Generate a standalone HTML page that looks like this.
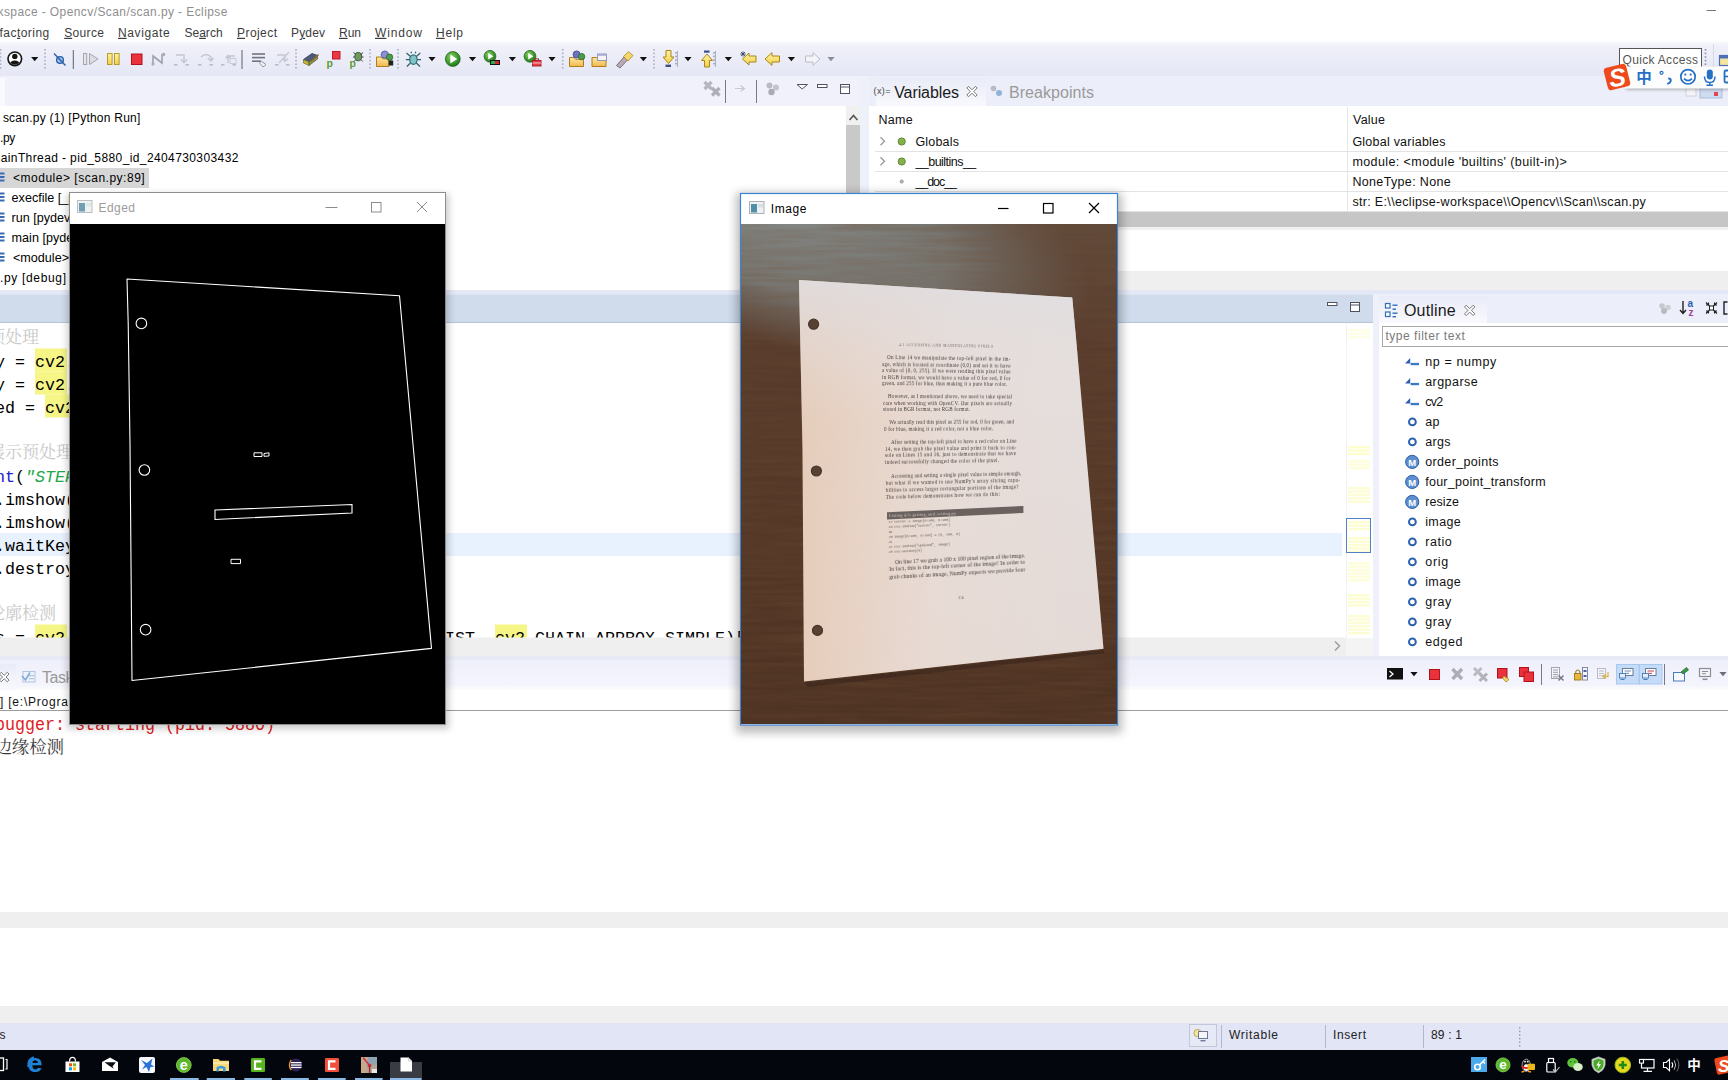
<!DOCTYPE html>
<html lang="zh"><head><meta charset="utf-8"><title>workspace - Opencv/Scan/scan.py - Eclipse</title>
<style>
html,body{margin:0;padding:0;background:#fff;width:1728px;height:1080px;overflow:hidden}
svg{display:block}
text{white-space:pre}
</style></head><body>
<svg width="1728" height="1080" viewBox="0 0 1728 1080">
<defs>
<linearGradient id="tbg" x1="0" y1="0" x2="0" y2="1">
<stop offset="0" stop-color="#fbfbfd"/><stop offset="0.15" stop-color="#eff0f9"/><stop offset="1" stop-color="#e5e7f5"/></linearGradient>
<linearGradient id="hs" x1="0" y1="0" x2="0" y2="1"><stop offset="0" stop-color="#ebebeb"/><stop offset="1" stop-color="#f6f6f6"/></linearGradient>
<linearGradient id="cstrip" x1="0" y1="0" x2="0" y2="1"><stop offset="0" stop-color="#eff0fa"/><stop offset="0.8" stop-color="#f3f4fc"/><stop offset="1" stop-color="#ffffff"/></linearGradient>
<linearGradient id="acttab" x1="0" y1="0" x2="0" y2="1"><stop offset="0" stop-color="#e9ebf7"/><stop offset="1" stop-color="#f9f9fd"/></linearGradient>
<radialGradient id="grn" cx="0.4" cy="0.35" r="0.7"><stop offset="0" stop-color="#8fd06a"/><stop offset="0.6" stop-color="#3f9a2f"/><stop offset="1" stop-color="#23701c"/></radialGradient>
<linearGradient id="yel" x1="0" y1="0" x2="0" y2="1"><stop offset="0" stop-color="#fff3a0"/><stop offset="1" stop-color="#f2cf4a"/></linearGradient>
<linearGradient id="fold" x1="0" y1="0" x2="0" y2="1"><stop offset="0" stop-color="#fde9a8"/><stop offset="1" stop-color="#f0b94a"/></linearGradient>
<filter id="ish" x="-10%" y="-30%" width="120%" height="160%"><feGaussianBlur stdDeviation="1.6"/></filter>
<filter id="wsh" x="-10%" y="-10%" width="120%" height="120%"><feGaussianBlur stdDeviation="5"/></filter><filter id="wsh2" x="-10%" y="-10%" width="120%" height="120%"><feGaussianBlur stdDeviation="3.5"/></filter>

<clipPath id="phc"><rect x="741" y="224" width="376" height="500"/></clipPath>
<linearGradient id="wood" x1="0" y1="0" x2="0" y2="1">
 <stop offset="0" stop-color="#614a3a"/><stop offset="0.25" stop-color="#583b2b"/><stop offset="0.6" stop-color="#543726"/><stop offset="1" stop-color="#4e3222"/></linearGradient>
<radialGradient id="glare" gradientUnits="userSpaceOnUse" cx="0" cy="0" r="1" gradientTransform="translate(770 212) rotate(17) scale(335 128)">
 <stop offset="0" stop-color="#848886" stop-opacity="1"/><stop offset="0.55" stop-color="#7a7b77" stop-opacity="0.9"/><stop offset="0.8" stop-color="#706a64" stop-opacity="0.5"/><stop offset="1" stop-color="#6a6058" stop-opacity="0"/></radialGradient>
<linearGradient id="paper" x1="0" y1="0" x2="1" y2="0.15">
 <stop offset="0" stop-color="#e3c5ae"/><stop offset="0.25" stop-color="#e7d0c1"/><stop offset="0.55" stop-color="#e7dcd7"/><stop offset="1" stop-color="#e3dddc"/></linearGradient>
<linearGradient id="paperv" x1="0" y1="0" x2="0" y2="1">
 <stop offset="0" stop-color="#e0dde0" stop-opacity="0.9"/><stop offset="0.35" stop-color="#e8e0dd" stop-opacity="0.2"/><stop offset="1" stop-color="#e8d0c0" stop-opacity="0.2"/></linearGradient>
<filter id="grain" x="0" y="0" width="100%" height="100%">
 <feTurbulence type="fractalNoise" baseFrequency="0.012 0.22" numOctaves="3" seed="7" result="n"/>
 <feColorMatrix type="matrix" values="0 0 0 0 0.16  0 0 0 0 0.08  0 0 0 0 0.04  0.9 0.9 0 0 -0.62"/>
</filter>
<filter id="blur1"><feGaussianBlur stdDeviation="0.38"/></filter>

</defs>
<rect x="0" y="0" width="1728" height="1080" fill="#ffffff" />
<rect x="0" y="41" width="1728" height="35" fill="url(#tbg)" />
<rect x="0" y="76" width="1728" height="30" fill="#f0f1fa" />
<rect x="0" y="78" width="5" height="28" fill="#f9f9fe" />
<rect x="859" y="76" width="10" height="214" fill="#eef0fa" />
<rect x="869" y="76" width="859" height="30" fill="#eceef9" />
<rect x="876" y="78" width="110" height="28" fill="url(#acttab)" />
<rect x="0" y="106" width="859" height="184" fill="#ffffff" />
<rect x="846" y="106" width="14" height="184" fill="#f0f0f0" />
<rect x="846" y="125" width="14" height="160" fill="#c9c9c9" />
<path d="M849.5 120 L853.5 115.5 L857.5 120" fill="none" stroke="#555" stroke-width="1.6" />
<rect x="869" y="106" width="859" height="184" fill="#ffffff" />
<line x1="875" y1="151.5" x2="1728" y2="151.5" stroke="#e3e3e3" stroke-width="1" />
<line x1="875" y1="171.5" x2="1728" y2="171.5" stroke="#e3e3e3" stroke-width="1" />
<line x1="875" y1="191.5" x2="1728" y2="191.5" stroke="#e3e3e3" stroke-width="1" />
<line x1="875" y1="211.5" x2="1728" y2="211.5" stroke="#e3e3e3" stroke-width="1" />
<line x1="1347.5" y1="107" x2="1347.5" y2="211" stroke="#e6e6e6" stroke-width="1" />
<rect x="869" y="212" width="859" height="15" fill="#c6c6c6" />
<rect x="869" y="227" width="859" height="3" fill="#f1f1f1" />
<rect x="869" y="271" width="859" height="19" fill="#efefef" />
<rect x="0" y="290" width="1728" height="4" fill="#e4e7f5" />
<rect x="0" y="294" width="1373" height="29" fill="#d0dcec" />
<rect x="0" y="294" width="1373" height="1" fill="#dfe6f3" />
<rect x="0" y="322" width="1373" height="1" fill="#b9c5d8" />
<rect x="1373" y="294" width="6" height="366" fill="#eef0fa" />
<rect x="1379" y="294" width="349" height="29" fill="#eceef9" />
<rect x="1379" y="296" width="108" height="27" fill="url(#acttab)" />
<rect x="0" y="323" width="1373" height="315" fill="#ffffff" />
<rect x="0" y="533" width="1342" height="23" fill="#e8f2fe" />
<rect x="1346" y="323" width="1" height="315" fill="#f3f3f3" />
<rect x="0" y="637.5" width="1346" height="18.5" fill="#efefef" />
<path d="M1335 641.5 L1339.5 646 L1335 650.5" fill="none" stroke="#9a9a9a" stroke-width="1.4" />
<rect x="1346" y="638" width="27" height="18" fill="#f4f4f4" />
<rect x="1379" y="323" width="349" height="335" fill="#ffffff" />
<rect x="0" y="656" width="1728" height="4" fill="#e8eaf6" />
<rect x="0" y="660" width="1728" height="31" fill="url(#cstrip)" />
<rect x="0" y="664" width="16" height="26" fill="url(#acttab)" />
<rect x="0" y="690" width="1728" height="222" fill="#ffffff" />
<rect x="0" y="710" width="1728" height="1" fill="#9c9c9c" />
<rect x="0" y="912" width="1728" height="16" fill="#efefef" />
<rect x="0" y="1006" width="1728" height="17" fill="#efefef" />
<rect x="0" y="1023" width="1728" height="27" fill="#e1e5f5" />
<rect x="0" y="1050" width="1728" height="30" fill="#04060e" />
<text x="3.6" y="15.7" font-size="12" fill="#8e8e8e" font-family='"Liberation Sans","Noto Sans CJK SC",sans-serif' text-anchor="end">eclipse-work</text>
<text x="3.9" y="15.7" font-size="12" fill="#8e8e8e" font-family='"Liberation Sans","Noto Sans CJK SC",sans-serif' textLength="223.5" lengthAdjust="spacing" >space - Opencv/Scan/scan.py - Eclipse</text>
<line x1="1706.5" y1="10.5" x2="1716" y2="10.5" stroke="#777" stroke-width="1" />
<text x="-0.8" y="36.8" font-size="12" fill="#3c3c3c" font-family='"Liberation Sans","Noto Sans CJK SC",sans-serif' text-anchor="end">Re</text>
<text x="-0.5" y="36.8" font-size="12" fill="#3c3c3c" font-family='"Liberation Sans","Noto Sans CJK SC",sans-serif' textLength="49.8" lengthAdjust="spacing">fac<tspan text-decoration="underline">t</tspan>oring</text>
<text x="64.2" y="36.8" font-size="12" fill="#3c3c3c" font-family='"Liberation Sans","Noto Sans CJK SC",sans-serif' textLength="39.7" lengthAdjust="spacing"><tspan text-decoration="underline">S</tspan>ource</text>
<text x="118" y="36.8" font-size="12" fill="#3c3c3c" font-family='"Liberation Sans","Noto Sans CJK SC",sans-serif' textLength="51.7" lengthAdjust="spacing"><tspan text-decoration="underline">N</tspan>avigate</text>
<text x="184.4" y="36.8" font-size="12" fill="#3c3c3c" font-family='"Liberation Sans","Noto Sans CJK SC",sans-serif' textLength="38.2" lengthAdjust="spacing">Se<tspan text-decoration="underline">a</tspan>rch</text>
<text x="237" y="36.8" font-size="12" fill="#3c3c3c" font-family='"Liberation Sans","Noto Sans CJK SC",sans-serif' textLength="40" lengthAdjust="spacing"><tspan text-decoration="underline">P</tspan>roject</text>
<text x="291" y="36.8" font-size="12" fill="#3c3c3c" font-family='"Liberation Sans","Noto Sans CJK SC",sans-serif' textLength="34" lengthAdjust="spacing">P<tspan text-decoration="underline">y</tspan>dev</text>
<text x="339" y="36.8" font-size="12" fill="#3c3c3c" font-family='"Liberation Sans","Noto Sans CJK SC",sans-serif' textLength="22" lengthAdjust="spacing"><tspan text-decoration="underline">R</tspan>un</text>
<text x="375" y="36.8" font-size="12" fill="#3c3c3c" font-family='"Liberation Sans","Noto Sans CJK SC",sans-serif' textLength="47" lengthAdjust="spacing"><tspan text-decoration="underline">W</tspan>indow</text>
<text x="436" y="36.8" font-size="12" fill="#3c3c3c" font-family='"Liberation Sans","Noto Sans CJK SC",sans-serif' textLength="27" lengthAdjust="spacing"><tspan text-decoration="underline">H</tspan>elp</text>
<rect x="0" y="168" width="149" height="20" fill="#d6d6d6" />
<text x="2.9" y="122" font-size="12" fill="#000" font-family='"Liberation Sans","Noto Sans CJK SC",sans-serif' textLength="137.4" lengthAdjust="spacing" >scan.py (1) [Python Run]</text>
<text x="-0.3" y="142" font-size="12" fill="#000" font-family='"Liberation Sans","Noto Sans CJK SC",sans-serif' text-anchor="end">scan</text>
<text x="0" y="142" font-size="12" fill="#000" font-family='"Liberation Sans","Noto Sans CJK SC",sans-serif' textLength="15.2" lengthAdjust="spacing" >.py</text>
<text x="0.39999999999999997" y="162" font-size="12" fill="#000" font-family='"Liberation Sans","Noto Sans CJK SC",sans-serif' text-anchor="end">M</text>
<text x="0.7" y="162" font-size="12" fill="#000" font-family='"Liberation Sans","Noto Sans CJK SC",sans-serif' textLength="237.7" lengthAdjust="spacing" >ainThread - pid_5880_id_2404730303432</text>
<text x="13" y="182" font-size="12" fill="#000" font-family='"Liberation Sans","Noto Sans CJK SC",sans-serif' textLength="131.7" lengthAdjust="spacing" >&lt;module&gt; [scan.py:89]</text>
<text x="11.6" y="202" font-size="12.6" fill="#000" font-family='"Liberation Sans","Noto Sans CJK SC",sans-serif' >execfile [_pydev_execfile.py:25]</text>
<text x="11.6" y="222" font-size="12.6" fill="#000" font-family='"Liberation Sans","Noto Sans CJK SC",sans-serif' >run [pydevd.py:1068]</text>
<text x="11.6" y="242" font-size="12.6" fill="#000" font-family='"Liberation Sans","Noto Sans CJK SC",sans-serif' >main [pydevd.py:1658]</text>
<text x="13" y="262" font-size="12.6" fill="#000" font-family='"Liberation Sans","Noto Sans CJK SC",sans-serif' >&lt;module&gt; [pydevd.py:1664]</text>
<text x="-0.3" y="282" font-size="12" fill="#000" font-family='"Liberation Sans","Noto Sans CJK SC",sans-serif' text-anchor="end">scan</text>
<text x="0" y="282" font-size="12" fill="#000" font-family='"Liberation Sans","Noto Sans CJK SC",sans-serif' textLength="66" lengthAdjust="spacing" >.py [debug]</text>
<rect x="0" y="172.5" width="4.5" height="2" fill="#3a6cb5" />
<rect x="0" y="176.0" width="4.5" height="2" fill="#3a6cb5" />
<rect x="0" y="179.5" width="4.5" height="2" fill="#3a6cb5" />
<rect x="0" y="192.5" width="4.5" height="2" fill="#3a6cb5" />
<rect x="0" y="196.0" width="4.5" height="2" fill="#3a6cb5" />
<rect x="0" y="199.5" width="4.5" height="2" fill="#3a6cb5" />
<rect x="0" y="212.5" width="4.5" height="2" fill="#3a6cb5" />
<rect x="0" y="216.0" width="4.5" height="2" fill="#3a6cb5" />
<rect x="0" y="219.5" width="4.5" height="2" fill="#3a6cb5" />
<rect x="0" y="232.5" width="4.5" height="2" fill="#3a6cb5" />
<rect x="0" y="236.0" width="4.5" height="2" fill="#3a6cb5" />
<rect x="0" y="239.5" width="4.5" height="2" fill="#3a6cb5" />
<rect x="0" y="252.5" width="4.5" height="2" fill="#3a6cb5" />
<rect x="0" y="256.0" width="4.5" height="2" fill="#3a6cb5" />
<rect x="0" y="259.5" width="4.5" height="2" fill="#3a6cb5" />
<text x="894.2" y="97.8" font-size="16" fill="#1a1a1a" font-family='"Liberation Sans","Noto Sans CJK SC",sans-serif' textLength="64.8" lengthAdjust="spacing" >Variables</text>
<text x="1009" y="97.8" font-size="16" fill="#9a9a9a" font-family='"Liberation Sans","Noto Sans CJK SC",sans-serif' textLength="85" lengthAdjust="spacing" >Breakpoints</text>
<text x="873.5" y="94" font-size="9" fill="#444" font-family='"Liberation Sans","Noto Sans CJK SC",sans-serif' textLength="17" lengthAdjust="spacing" >(x)=</text>
<text x="878.6" y="124" font-size="12.5" fill="#111" font-family='"Liberation Sans","Noto Sans CJK SC",sans-serif' textLength="34" lengthAdjust="spacing" >Name</text>
<text x="1353" y="124" font-size="12.5" fill="#111" font-family='"Liberation Sans","Noto Sans CJK SC",sans-serif' textLength="32" lengthAdjust="spacing" >Value</text>
<text x="915.4" y="145.8" font-size="12.5" fill="#111" font-family='"Liberation Sans","Noto Sans CJK SC",sans-serif' textLength="43.6" lengthAdjust="spacing" >Globals</text>
<text x="1352.4" y="145.8" font-size="12.5" fill="#111" font-family='"Liberation Sans","Noto Sans CJK SC",sans-serif' textLength="93.1" lengthAdjust="spacing" >Global variables</text>
<path d="M880.5 137.3 L884.5 141.3 L880.5 145.3" fill="none" stroke="#9a9a9a" stroke-width="1.3" />
<circle cx="901.7" cy="141.5" r="3.6" fill="#86b04e" stroke="#5f8a32" stroke-width="1" />
<text x="915.4" y="165.8" font-size="12.5" fill="#111" font-family='"Liberation Sans","Noto Sans CJK SC",sans-serif' textLength="60.9" lengthAdjust="spacing" >__builtins__</text>
<text x="1352.4" y="165.8" font-size="12.5" fill="#111" font-family='"Liberation Sans","Noto Sans CJK SC",sans-serif' textLength="214.4" lengthAdjust="spacing" >module: &lt;module 'builtins' (built-in)&gt;</text>
<path d="M880.5 157.3 L884.5 161.3 L880.5 165.3" fill="none" stroke="#9a9a9a" stroke-width="1.3" />
<circle cx="901.7" cy="161.5" r="3.6" fill="#86b04e" stroke="#5f8a32" stroke-width="1" />
<text x="915.4" y="185.8" font-size="12.5" fill="#111" font-family='"Liberation Sans","Noto Sans CJK SC",sans-serif' textLength="41.6" lengthAdjust="spacing" >__doc__</text>
<text x="1352.4" y="185.8" font-size="12.5" fill="#111" font-family='"Liberation Sans","Noto Sans CJK SC",sans-serif' textLength="98.3" lengthAdjust="spacing" >NoneType: None</text>
<circle cx="901.7" cy="181.5" r="1.6" fill="#b8b8b8" stroke="#8a8a8a" stroke-width="0.8" />
<text x="915.4" y="205.8" font-size="12.5" fill="#111" font-family='"Liberation Sans","Noto Sans CJK SC",sans-serif' textLength="40" lengthAdjust="spacing" >__file__</text>
<text x="1352.4" y="205.8" font-size="12.5" fill="#111" font-family='"Liberation Sans","Noto Sans CJK SC",sans-serif' textLength="293.4" lengthAdjust="spacing" >str: E:\\eclipse-workspace\\Opencv\\Scan\\scan.py</text>
<circle cx="901.7" cy="201.5" r="1.6" fill="#b8b8b8" stroke="#8a8a8a" stroke-width="0.8" />
<text x="1404" y="316" font-size="16" fill="#1a1a1a" font-family='"Liberation Sans","Noto Sans CJK SC",sans-serif' textLength="51.6" lengthAdjust="spacing" >Outline</text>
<rect x="1382.5" y="326.5" width="360" height="20" fill="#ffffff" stroke="#a7a7a7" stroke-width="1"/>
<text x="1385.4" y="340.4" font-size="12" fill="#7a7a7a" font-family='"Liberation Sans","Noto Sans CJK SC",sans-serif' textLength="79.4" lengthAdjust="spacing" >type filter text</text>
<text x="1425.2" y="366.4" font-size="12.5" fill="#111" font-family='"Liberation Sans","Noto Sans CJK SC",sans-serif' textLength="71.1" lengthAdjust="spacing" >np = numpy</text>
<path d="M1405 363.5 L1410.2 358.09999999999997 L1410.2 363.5 Z" fill="#2f5fb0" stroke="none" stroke-width="1" />
<rect x="1410.6" y="362.9" width="8.4" height="2.3" fill="#3a78c8" />
<text x="1425.2" y="386.4" font-size="12.5" fill="#111" font-family='"Liberation Sans","Noto Sans CJK SC",sans-serif' textLength="52.5" lengthAdjust="spacing" >argparse</text>
<path d="M1405 383.5 L1410.2 378.09999999999997 L1410.2 383.5 Z" fill="#2f5fb0" stroke="none" stroke-width="1" />
<rect x="1410.6" y="382.9" width="8.4" height="2.3" fill="#3a78c8" />
<text x="1425.2" y="406.4" font-size="12.5" fill="#111" font-family='"Liberation Sans","Noto Sans CJK SC",sans-serif' textLength="18.1" lengthAdjust="spacing" >cv2</text>
<path d="M1405 403.5 L1410.2 398.09999999999997 L1410.2 403.5 Z" fill="#2f5fb0" stroke="none" stroke-width="1" />
<rect x="1410.6" y="402.9" width="8.4" height="2.3" fill="#3a78c8" />
<text x="1425.2" y="426.4" font-size="12.5" fill="#111" font-family='"Liberation Sans","Noto Sans CJK SC",sans-serif' textLength="14.2" lengthAdjust="spacing" >ap</text>
<circle cx="1412.4" cy="421.9" r="3.4" fill="#fff" stroke="#2d62b0" stroke-width="2" />
<text x="1425.2" y="446.4" font-size="12.5" fill="#111" font-family='"Liberation Sans","Noto Sans CJK SC",sans-serif' textLength="25.3" lengthAdjust="spacing" >args</text>
<circle cx="1412.4" cy="441.9" r="3.4" fill="#fff" stroke="#2d62b0" stroke-width="2" />
<text x="1425.2" y="466.4" font-size="12.5" fill="#111" font-family='"Liberation Sans","Noto Sans CJK SC",sans-serif' textLength="73.4" lengthAdjust="spacing" >order_points</text>
<circle cx="1412.2" cy="461.9" r="6.6" fill="#5d8fd0" stroke="#2f5fa8" stroke-width="1" />
<text x="1412.2" y="465.5" font-size="9.5" fill="#fff" font-family='"Liberation Sans","Noto Sans CJK SC",sans-serif' text-anchor="middle" font-weight="bold">M</text>
<text x="1425.2" y="486.4" font-size="12.5" fill="#111" font-family='"Liberation Sans","Noto Sans CJK SC",sans-serif' textLength="120.4" lengthAdjust="spacing" >four_point_transform</text>
<circle cx="1412.2" cy="481.9" r="6.6" fill="#5d8fd0" stroke="#2f5fa8" stroke-width="1" />
<text x="1412.2" y="485.5" font-size="9.5" fill="#fff" font-family='"Liberation Sans","Noto Sans CJK SC",sans-serif' text-anchor="middle" font-weight="bold">M</text>
<text x="1425.2" y="506.4" font-size="12.5" fill="#111" font-family='"Liberation Sans","Noto Sans CJK SC",sans-serif' textLength="33.7" lengthAdjust="spacing" >resize</text>
<circle cx="1412.2" cy="501.9" r="6.6" fill="#5d8fd0" stroke="#2f5fa8" stroke-width="1" />
<text x="1412.2" y="505.5" font-size="9.5" fill="#fff" font-family='"Liberation Sans","Noto Sans CJK SC",sans-serif' text-anchor="middle" font-weight="bold">M</text>
<text x="1425.2" y="526.4" font-size="12.5" fill="#111" font-family='"Liberation Sans","Noto Sans CJK SC",sans-serif' textLength="35.6" lengthAdjust="spacing" >image</text>
<circle cx="1412.4" cy="521.9" r="3.4" fill="#fff" stroke="#2d62b0" stroke-width="2" />
<text x="1425.2" y="546.4" font-size="12.5" fill="#111" font-family='"Liberation Sans","Noto Sans CJK SC",sans-serif' textLength="26.5" lengthAdjust="spacing" >ratio</text>
<circle cx="1412.4" cy="541.9" r="3.4" fill="#fff" stroke="#2d62b0" stroke-width="2" />
<text x="1425.2" y="566.4" font-size="12.5" fill="#111" font-family='"Liberation Sans","Noto Sans CJK SC",sans-serif' textLength="23.1" lengthAdjust="spacing" >orig</text>
<circle cx="1412.4" cy="561.9" r="3.4" fill="#fff" stroke="#2d62b0" stroke-width="2" />
<text x="1425.2" y="586.4" font-size="12.5" fill="#111" font-family='"Liberation Sans","Noto Sans CJK SC",sans-serif' textLength="35.6" lengthAdjust="spacing" >image</text>
<circle cx="1412.4" cy="581.9" r="3.4" fill="#fff" stroke="#2d62b0" stroke-width="2" />
<text x="1425.2" y="606.4" font-size="12.5" fill="#111" font-family='"Liberation Sans","Noto Sans CJK SC",sans-serif' textLength="26" lengthAdjust="spacing" >gray</text>
<circle cx="1412.4" cy="601.9" r="3.4" fill="#fff" stroke="#2d62b0" stroke-width="2" />
<text x="1425.2" y="626.4" font-size="12.5" fill="#111" font-family='"Liberation Sans","Noto Sans CJK SC",sans-serif' textLength="26" lengthAdjust="spacing" >gray</text>
<circle cx="1412.4" cy="621.9" r="3.4" fill="#fff" stroke="#2d62b0" stroke-width="2" />
<text x="1425.2" y="646.4" font-size="12.5" fill="#111" font-family='"Liberation Sans","Noto Sans CJK SC",sans-serif' textLength="37.3" lengthAdjust="spacing" >edged</text>
<circle cx="1412.4" cy="641.9" r="3.4" fill="#fff" stroke="#2d62b0" stroke-width="2" />
<text x="-35" y="344" font-size="17.4" fill="#c8c8c8" font-family='"Liberation Mono","Noto Sans CJK SC",monospace' textLength="10" lengthAdjust="spacingAndGlyphs" >#</text>
<text x="-12" y="343" font-size="17" fill="#c8c8c8" font-family='"Noto Serif CJK SC","Liberation Serif",serif' textLength="51" lengthAdjust="spacing" >预处理</text>
<rect x="35" y="348.5" width="32" height="23" fill="#f6f686" />
<text x="-35" y="367" font-size="17.4" fill="#000" font-family='"Liberation Mono","Noto Sans CJK SC",monospace' textLength="460" lengthAdjust="spacingAndGlyphs" >gray = cv2.cvtColor(image, cv2.COLOR_BGR2GRAY)</text>
<rect x="35" y="371.5" width="32" height="23" fill="#f6f686" />
<text x="-35" y="390" font-size="17.4" fill="#000" font-family='"Liberation Mono","Noto Sans CJK SC",monospace' textLength="400" lengthAdjust="spacingAndGlyphs" >gray = cv2.GaussianBlur(gray, (5, 5), 0)</text>
<rect x="45" y="394.5" width="32" height="23" fill="#f6f686" />
<text x="-35" y="413" font-size="17.4" fill="#000" font-family='"Liberation Mono","Noto Sans CJK SC",monospace' textLength="320" lengthAdjust="spacingAndGlyphs" >edged = cv2.Canny(gray, 75, 200)</text>
<text x="-35" y="459" font-size="17.4" fill="#c8c8c8" font-family='"Liberation Mono","Noto Sans CJK SC",monospace' textLength="10" lengthAdjust="spacingAndGlyphs" >#</text>
<text x="-12" y="458" font-size="17" fill="#c8c8c8" font-family='"Noto Serif CJK SC","Liberation Serif",serif' textLength="119" lengthAdjust="spacing" >展示预处理结果</text>
<text x="-35" y="482" font-size="17.4" fill="#2222cc" font-family='"Liberation Mono","Noto Sans CJK SC",monospace' textLength="50" lengthAdjust="spacingAndGlyphs" >print</text>
<text x="15" y="482" font-size="17.4" fill="#000" font-family='"Liberation Mono","Noto Sans CJK SC",monospace' textLength="10" lengthAdjust="spacingAndGlyphs" >(</text>
<text x="25" y="482" font-size="17.4" fill="#22a84a" font-family='"Liberation Mono","Noto Sans CJK SC",monospace' textLength="90" lengthAdjust="spacingAndGlyphs" font-style="italic">"STEP 1: </text>
<text x="115" y="481" font-size="17" fill="#22a84a" font-family='"Noto Serif CJK SC","Liberation Serif",serif' textLength="68" lengthAdjust="spacing" >边缘检测</text>
<text x="185" y="482" font-size="17.4" fill="#22a84a" font-family='"Liberation Mono","Noto Sans CJK SC",monospace' textLength="10" lengthAdjust="spacingAndGlyphs" font-style="italic">"</text>
<text x="195" y="482" font-size="17.4" fill="#000" font-family='"Liberation Mono","Noto Sans CJK SC",monospace' textLength="10" lengthAdjust="spacingAndGlyphs" >)</text>
<text x="-35" y="505" font-size="17.4" fill="#000" font-family='"Liberation Mono","Noto Sans CJK SC",monospace' textLength="260" lengthAdjust="spacingAndGlyphs" >cv2.imshow("Image", image)</text>
<text x="-35" y="528" font-size="17.4" fill="#000" font-family='"Liberation Mono","Noto Sans CJK SC",monospace' textLength="260" lengthAdjust="spacingAndGlyphs" >cv2.imshow("Edged", edged)</text>
<text x="-35" y="551" font-size="17.4" fill="#000" font-family='"Liberation Mono","Noto Sans CJK SC",monospace' textLength="140" lengthAdjust="spacingAndGlyphs" >cv2.waitKey(0)</text>
<text x="-35" y="574" font-size="17.4" fill="#000" font-family='"Liberation Mono","Noto Sans CJK SC",monospace' textLength="230" lengthAdjust="spacingAndGlyphs" >cv2.destroyAllWindows()</text>
<text x="-35" y="620" font-size="17.4" fill="#c8c8c8" font-family='"Liberation Mono","Noto Sans CJK SC",monospace' textLength="10" lengthAdjust="spacingAndGlyphs" >#</text>
<text x="-12" y="619" font-size="17" fill="#c8c8c8" font-family='"Noto Serif CJK SC","Liberation Serif",serif' textLength="68" lengthAdjust="spacing" >轮廓检测</text>
<clipPath id="edclip"><rect x="0" y="323" width="1346" height="314.5"/></clipPath><g clip-path="url(#edclip)">
<rect x="35" y="624.5" width="32" height="23" fill="#f6f686" />
<rect x="345" y="624.5" width="32" height="23" fill="#f6f686" />
<rect x="495" y="624.5" width="32" height="23" fill="#f6f686" />
<text x="-35" y="643" font-size="17.4" fill="#000" font-family='"Liberation Mono","Noto Sans CJK SC",monospace' textLength="800" lengthAdjust="spacingAndGlyphs" >cnts = cv2.findContours(edged.copy(), cv2.RETR_LIST, cv2.CHAIN_APPROX_SIMPLE)[1]</text>
</g>
<rect x="1348" y="329" width="22" height="2.4" fill="#fbfb9c" opacity="0.27"/>
<rect x="1348" y="332.4" width="22" height="2.4" fill="#fbfb9c" opacity="0.27"/>
<rect x="1348" y="335.79999999999995" width="22" height="2.4" fill="#fbfb9c" opacity="0.27"/>
<rect x="1348" y="446" width="22" height="2.4" fill="#fbfb9c" opacity="0.51"/>
<rect x="1348" y="449.4" width="22" height="2.4" fill="#fbfb9c" opacity="0.51"/>
<rect x="1348" y="452.79999999999995" width="22" height="2.4" fill="#fbfb9c" opacity="0.51"/>
<rect x="1348" y="460" width="22" height="2.4" fill="#fbfb9c" opacity="0.36"/>
<rect x="1348" y="463.4" width="22" height="2.4" fill="#fbfb9c" opacity="0.36"/>
<rect x="1348" y="466.79999999999995" width="22" height="2.4" fill="#fbfb9c" opacity="0.36"/>
<rect x="1348" y="487" width="22" height="2.4" fill="#fbfb9c" opacity="0.42"/>
<rect x="1348" y="490.4" width="22" height="2.4" fill="#fbfb9c" opacity="0.42"/>
<rect x="1348" y="493.79999999999995" width="22" height="2.4" fill="#fbfb9c" opacity="0.42"/>
<rect x="1348" y="497.19999999999993" width="22" height="2.4" fill="#fbfb9c" opacity="0.42"/>
<rect x="1348" y="500.5999999999999" width="22" height="2.4" fill="#fbfb9c" opacity="0.42"/>
<rect x="1348" y="521" width="22" height="2.4" fill="#fbfb9c" opacity="0.48"/>
<rect x="1348" y="524.4" width="22" height="2.4" fill="#fbfb9c" opacity="0.48"/>
<rect x="1348" y="527.8" width="22" height="2.4" fill="#fbfb9c" opacity="0.48"/>
<rect x="1348" y="537" width="22" height="2.4" fill="#fbfb9c" opacity="0.48"/>
<rect x="1348" y="540.4" width="22" height="2.4" fill="#fbfb9c" opacity="0.48"/>
<rect x="1348" y="543.8" width="22" height="2.4" fill="#fbfb9c" opacity="0.48"/>
<rect x="1348" y="547.1999999999999" width="22" height="2.4" fill="#fbfb9c" opacity="0.48"/>
<rect x="1348" y="550.5999999999999" width="22" height="2.4" fill="#fbfb9c" opacity="0.48"/>
<rect x="1348" y="562" width="22" height="2.4" fill="#fbfb9c" opacity="0.39"/>
<rect x="1348" y="565.4" width="22" height="2.4" fill="#fbfb9c" opacity="0.39"/>
<rect x="1348" y="568.8" width="22" height="2.4" fill="#fbfb9c" opacity="0.39"/>
<rect x="1348" y="572.1999999999999" width="22" height="2.4" fill="#fbfb9c" opacity="0.39"/>
<rect x="1348" y="575.5999999999999" width="22" height="2.4" fill="#fbfb9c" opacity="0.39"/>
<rect x="1348" y="578.9999999999999" width="22" height="2.4" fill="#fbfb9c" opacity="0.39"/>
<rect x="1348" y="594" width="22" height="2.4" fill="#fbfb9c" opacity="0.45"/>
<rect x="1348" y="597.4" width="22" height="2.4" fill="#fbfb9c" opacity="0.45"/>
<rect x="1348" y="600.8" width="22" height="2.4" fill="#fbfb9c" opacity="0.45"/>
<rect x="1348" y="604.1999999999999" width="22" height="2.4" fill="#fbfb9c" opacity="0.45"/>
<rect x="1348" y="615" width="22" height="2.4" fill="#fbfb9c" opacity="0.42"/>
<rect x="1348" y="618.4" width="22" height="2.4" fill="#fbfb9c" opacity="0.42"/>
<rect x="1348" y="621.8" width="22" height="2.4" fill="#fbfb9c" opacity="0.42"/>
<rect x="1348" y="625.1999999999999" width="22" height="2.4" fill="#fbfb9c" opacity="0.42"/>
<rect x="1348" y="628.5999999999999" width="22" height="2.4" fill="#fbfb9c" opacity="0.42"/>
<rect x="1348" y="631.9999999999999" width="22" height="2.4" fill="#fbfb9c" opacity="0.42"/>
<rect x="1346.5" y="518.5" width="24" height="34" fill="none" stroke="#4f81c9" stroke-width="1"/>
<text x="42.1" y="682.8" font-size="16" fill="#9a9a9a" font-family='"Liberation Sans","Noto Sans CJK SC",sans-serif' textLength="39" lengthAdjust="spacing" >Tasks</text>
<text x="-0.3" y="706.4" font-size="12" fill="#111" font-family='"Liberation Sans","Noto Sans CJK SC",sans-serif' text-anchor="end">scan.py [debug</text>
<text x="0" y="706.4" font-size="12" fill="#111" font-family='"Liberation Sans","Noto Sans CJK SC",sans-serif' textLength="248" lengthAdjust="spacing" >] [e:\Program Files\Python36\python.exe]</text>
<text x="-85" y="730.3" font-size="17.6" fill="#e01b24" font-family='"Liberation Mono","Noto Sans CJK SC",monospace' textLength="360" lengthAdjust="spacingAndGlyphs" >pydev debugger: starting (pid: 5880)</text>
<text x="-85" y="753.3" font-size="17.6" fill="#333" font-family='"Liberation Mono","Noto Sans CJK SC",monospace' textLength="80" lengthAdjust="spacingAndGlyphs" >STEP 1: </text>
<text x="-5.5" y="753.2" font-size="17.5" fill="#3a3a3a" font-family='"Noto Serif CJK SC","Liberation Serif",serif' textLength="69.5" lengthAdjust="spacing" >边缘检测</text>
<text x="-0.5" y="1039" font-size="12" fill="#222" font-family='"Liberation Sans","Noto Sans CJK SC",sans-serif' >s</text>
<text x="1229" y="1039" font-size="12" fill="#222" font-family='"Liberation Sans","Noto Sans CJK SC",sans-serif' textLength="49" lengthAdjust="spacing" >Writable</text>
<text x="1333" y="1039" font-size="12" fill="#222" font-family='"Liberation Sans","Noto Sans CJK SC",sans-serif' textLength="33" lengthAdjust="spacing" >Insert</text>
<text x="1431" y="1039" font-size="12" fill="#222" font-family='"Liberation Sans","Noto Sans CJK SC",sans-serif' textLength="31" lengthAdjust="spacing" >89 : 1</text>
<line x1="1221.5" y1="1025" x2="1221.5" y2="1048" stroke="#b4b8c8" stroke-width="1" />
<line x1="1325.5" y1="1025" x2="1325.5" y2="1048" stroke="#b4b8c8" stroke-width="1" />
<line x1="1423.5" y1="1025" x2="1423.5" y2="1048" stroke="#b4b8c8" stroke-width="1" />
<rect x="1519" y="1027.0" width="1.4" height="1.6" fill="#9a9fb5" />
<rect x="1519" y="1030.6" width="1.4" height="1.6" fill="#9a9fb5" />
<rect x="1519" y="1034.2" width="1.4" height="1.6" fill="#9a9fb5" />
<rect x="1519" y="1037.8" width="1.4" height="1.6" fill="#9a9fb5" />
<rect x="1519" y="1041.4" width="1.4" height="1.6" fill="#9a9fb5" />
<rect x="1519" y="1045.0" width="1.4" height="1.6" fill="#9a9fb5" />
<rect x="1619.5" y="48.5" width="82" height="19" fill="#ffffff" stroke="#555" stroke-width="1"/>
<text x="1622.5" y="63.7" font-size="12" fill="#555" font-family='"Liberation Sans","Noto Sans CJK SC",sans-serif' textLength="75.5" lengthAdjust="spacing" >Quick Access</text>
<rect x="-0.30000000000000004" y="49" width="1.6" height="1.6" fill="#a9aec4" />
<rect x="-0.30000000000000004" y="52.6" width="1.6" height="1.6" fill="#a9aec4" />
<rect x="-0.30000000000000004" y="56.2" width="1.6" height="1.6" fill="#a9aec4" />
<rect x="-0.30000000000000004" y="59.800000000000004" width="1.6" height="1.6" fill="#a9aec4" />
<rect x="-0.30000000000000004" y="63.400000000000006" width="1.6" height="1.6" fill="#a9aec4" />
<rect x="-0.30000000000000004" y="67.0" width="1.6" height="1.6" fill="#a9aec4" />
<circle cx="14.8" cy="58.8" r="7.6" fill="#151515" stroke="none" stroke-width="1" />
<circle cx="14.8" cy="58.8" r="6.0" fill="#ffffff" stroke="none" stroke-width="1" />
<clipPath id="pc"><circle cx="14.8" cy="58.8" r="6"/></clipPath>
<circle cx="14.8" cy="56.4" r="2.7" fill="#151515" stroke="none" stroke-width="1" />
<ellipse cx="14.8" cy="64.6" rx="5.2" ry="4.2" fill="#151515" clip-path="url(#pc)"/>
<path d="M31.1 57 L38.300000000000004 57 L34.7 61.2 Z" fill="#111" stroke="none" stroke-width="1" />
<rect x="44.2" y="49" width="1.6" height="1.6" fill="#a9aec4" />
<rect x="44.2" y="52.6" width="1.6" height="1.6" fill="#a9aec4" />
<rect x="44.2" y="56.2" width="1.6" height="1.6" fill="#a9aec4" />
<rect x="44.2" y="59.800000000000004" width="1.6" height="1.6" fill="#a9aec4" />
<rect x="44.2" y="63.400000000000006" width="1.6" height="1.6" fill="#a9aec4" />
<rect x="44.2" y="67.0" width="1.6" height="1.6" fill="#a9aec4" />
<circle cx="60" cy="60" r="3.4" fill="#9fc0ea" stroke="#2a5fa8" stroke-width="1.3" />
<line x1="54" y1="53.5" x2="65.5" y2="65.5" stroke="#2a5fa8" stroke-width="1.4" />
<line x1="73.3" y1="50" x2="73.3" y2="69" stroke="#5a6072" stroke-width="1" />
<rect x="83.5" y="53.5" width="3.2" height="11" fill="#e4e4ea" stroke="#a3a5ad" stroke-width="1"/>
<path d="M89.5 53.5 L98 59 L89.5 64.5 Z" fill="#dcdce3" stroke="#a3a5ad" stroke-width="1" />
<rect x="107.5" y="53.5" width="4.6" height="11" fill="url(#yel)" stroke="#b89a28" stroke-width="1"/>
<rect x="114.5" y="53.5" width="4.6" height="11" fill="url(#yel)" stroke="#b89a28" stroke-width="1"/>
<rect x="131.5" y="54" width="10.5" height="10.5" fill="#e9323c" stroke="#b3121c" stroke-width="1"/>
<path d="M153 64 L153 56 L162 63 L162 54" fill="none" stroke="#a0a3ab" stroke-width="1.6" />
<circle cx="163.5" cy="54.5" r="1.8" fill="#a9acb4" stroke="none" stroke-width="1" />
<circle cx="153" cy="64" r="1.6" fill="#a9acb4" stroke="none" stroke-width="1" />
<rect x="174" y="64" width="3.5" height="1.6" fill="#b9bcc6" />
<rect x="185.5" y="64" width="3.5" height="1.6" fill="#b9bcc6" />
<rect x="198" y="64" width="3.5" height="1.6" fill="#b9bcc6" />
<rect x="209.5" y="64" width="3.5" height="1.6" fill="#b9bcc6" />
<rect x="221" y="64" width="3.5" height="1.6" fill="#b9bcc6" />
<rect x="232.5" y="64" width="3.5" height="1.6" fill="#b9bcc6" />
<path d="M176 55 L184 55 L184 62 M181 59.5 L184 62.5 L187 59.5" fill="none" stroke="#c3c6cf" stroke-width="1.4" />
<path d="M201 57 Q206 52 211 57 L211 60 M208 58 L211 61 L213.5 58" fill="none" stroke="#c3c6cf" stroke-width="1.4" />
<path d="M228 63 L228 56 L235 56 M225.5 58.5 L228 55.5 L230.5 58.5" fill="none" stroke="#c3c6cf" stroke-width="1.4" />
<rect x="230" y="58.5" width="6" height="5" fill="none" stroke="#c9ccd4" stroke-width="1"/>
<line x1="242" y1="50" x2="242" y2="69" stroke="#5a6072" stroke-width="1" />
<rect x="252" y="53.2" width="13" height="1.6" fill="#70747e" />
<rect x="252" y="56.800000000000004" width="13" height="1.6" fill="#70747e" />
<rect x="252" y="60.400000000000006" width="9" height="1.6" fill="#70747e" />
<path d="M261 61 L266 64.5 L263 67 L259.5 63 Z" fill="#f2f2f5" stroke="#8a8d96" stroke-width="0.9" />
<rect x="275" y="64" width="3.5" height="1.6" fill="#b9bcc6" />
<rect x="286" y="64" width="3.5" height="1.6" fill="#b9bcc6" />
<path d="M277 55 L285 55 L285 61 M282.5 58.5 L285 61.5 L288 58.5 M279 63 L289 52" fill="none" stroke="#c6c9d1" stroke-width="1.3" />
<rect x="295.2" y="49" width="1.6" height="1.6" fill="#a9aec4" />
<rect x="295.2" y="52.6" width="1.6" height="1.6" fill="#a9aec4" />
<rect x="295.2" y="56.2" width="1.6" height="1.6" fill="#a9aec4" />
<rect x="295.2" y="59.800000000000004" width="1.6" height="1.6" fill="#a9aec4" />
<rect x="295.2" y="63.400000000000006" width="1.6" height="1.6" fill="#a9aec4" />
<rect x="295.2" y="67.0" width="1.6" height="1.6" fill="#a9aec4" />
<path d="M303.5 59.5 L312 53.5 L317.5 55.5 L309 62 Z" fill="#4d5a7a" stroke="#2f3a55" stroke-width="0.8" />
<path d="M303.5 59.5 L309 62 L309 65.5 L303.5 63 Z" fill="#c7b43a" stroke="#6d6a2a" stroke-width="0.7" />
<path d="M309 62 L317.5 55.5 L317.5 59 L309 65.5 Z" fill="#8c9a4a" stroke="#4a5530" stroke-width="0.7" />
<path d="M311 61.5 L318.5 54.5" fill="none" stroke="#8a6a3a" stroke-width="1.6" />
<text x="326.6" y="66.5" font-size="10.5" fill="#5e9a3a" font-family='"Liberation Sans","Noto Sans CJK SC",sans-serif' font-weight="bold">p</text>
<rect x="332.5" y="51.5" width="7.5" height="7.5" fill="#ea3844" stroke="#c21a28" stroke-width="1"/>
<text x="349.6" y="66.5" font-size="10.5" fill="#5e9a3a" font-family='"Liberation Sans","Noto Sans CJK SC",sans-serif' font-weight="bold">p</text>
<ellipse cx="358.3" cy="56.6" rx="3.4" ry="4.2" fill="#6e9a5a" stroke="#3d5a3a" stroke-width="1"/>
<path d="M353.5 52.5 L356 54.5 M363 52.5 L360.6 54.5 M353 57 L355 57 M363.6 57 L361.6 57 M354 61.5 L356 59.5 M362.8 61.5 L360.8 59.5" fill="none" stroke="#3d4a48" stroke-width="1" />
<rect x="369.2" y="49" width="1.6" height="1.6" fill="#a9aec4" />
<rect x="369.2" y="52.6" width="1.6" height="1.6" fill="#a9aec4" />
<rect x="369.2" y="56.2" width="1.6" height="1.6" fill="#a9aec4" />
<rect x="369.2" y="59.800000000000004" width="1.6" height="1.6" fill="#a9aec4" />
<rect x="369.2" y="63.400000000000006" width="1.6" height="1.6" fill="#a9aec4" />
<rect x="369.2" y="67.0" width="1.6" height="1.6" fill="#a9aec4" />
<path d="M376.5 57 L381 57 L382.5 58.8 L389 58.8 L389 66.5 L376.5 66.5 Z" fill="url(#fold)" stroke="#b47a1c" stroke-width="1" />
<circle cx="384.8" cy="54.6" r="3.6" fill="#8a8fd6" stroke="#4a4f9a" stroke-width="0.8" />
<circle cx="389.6" cy="57.2" r="3.2" fill="#4f9a4a" stroke="#2a6a2a" stroke-width="0.8" />
<rect x="388.6" y="60.5" width="4.6" height="5" fill="#222" />
<rect x="397.2" y="49" width="1.6" height="1.6" fill="#a9aec4" />
<rect x="397.2" y="52.6" width="1.6" height="1.6" fill="#a9aec4" />
<rect x="397.2" y="56.2" width="1.6" height="1.6" fill="#a9aec4" />
<rect x="397.2" y="59.800000000000004" width="1.6" height="1.6" fill="#a9aec4" />
<rect x="397.2" y="63.400000000000006" width="1.6" height="1.6" fill="#a9aec4" />
<rect x="397.2" y="67.0" width="1.6" height="1.6" fill="#a9aec4" />
<ellipse cx="413.4" cy="59.6" rx="3.7" ry="4.8" fill="#7fc4c4" stroke="#2f6f7a" stroke-width="1.2"/>
<path d="M406.5 53 L410.5 56.5 M420.3 53 L416.3 56.5 M405.8 59.6 L409.5 59.6 M421 59.6 L417.3 59.6 M406.8 66.5 L410.5 63 M420 66.5 L416.3 63 M411.5 53.3 L411 51.8 M415.3 53.3 L415.8 51.8" fill="none" stroke="#2f5f6a" stroke-width="1.2" />
<path d="M428.4 57 L435.6 57 L432 61.2 Z" fill="#111" stroke="none" stroke-width="1" />
<circle cx="452.8" cy="59" r="7.4" fill="url(#grn)" stroke="#1f6a1a" stroke-width="0.8" />
<path d="M450.3 54.6 L457.3 59 L450.3 63.4 Z" fill="#ffffff" stroke="none" stroke-width="1" />
<path d="M468.9 57 L476.1 57 L472.5 61.2 Z" fill="#111" stroke="none" stroke-width="1" />
<circle cx="490" cy="56.3" r="5.9" fill="url(#grn)" stroke="#1f6a1a" stroke-width="0.8" />
<path d="M488.2 53 L493.4 56.3 L488.2 59.6 Z" fill="#ffffff" stroke="none" stroke-width="1" />
<rect x="490" y="60" width="10" height="5" fill="#111" />
<rect x="491" y="61" width="4" height="3" fill="#22b14c" />
<rect x="495" y="61" width="4" height="3" fill="#e0202a" />
<path d="M508.79999999999995 57 L516.0 57 L512.4 61.2 Z" fill="#111" stroke="none" stroke-width="1" />
<circle cx="530" cy="56.3" r="5.9" fill="url(#grn)" stroke="#1f6a1a" stroke-width="0.8" />
<path d="M528.2 53 L533.4 56.3 L528.2 59.6 Z" fill="#ffffff" stroke="none" stroke-width="1" />
<rect x="532.5" y="60.5" width="8.5" height="5.5" fill="#e8404a" stroke="#a81820" stroke-width="0.9"/>
<rect x="535" y="58.8" width="3.5" height="1.8" fill="none" stroke="#a81820" stroke-width="0.9"/>
<rect x="532.5" y="62.5" width="8.5" height="1" fill="#f7c0c4" />
<path d="M548.4 57 L555.6 57 L552 61.2 Z" fill="#111" stroke="none" stroke-width="1" />
<rect x="561.9000000000001" y="49" width="1.6" height="1.6" fill="#a9aec4" />
<rect x="561.9000000000001" y="52.6" width="1.6" height="1.6" fill="#a9aec4" />
<rect x="561.9000000000001" y="56.2" width="1.6" height="1.6" fill="#a9aec4" />
<rect x="561.9000000000001" y="59.800000000000004" width="1.6" height="1.6" fill="#a9aec4" />
<rect x="561.9000000000001" y="63.400000000000006" width="1.6" height="1.6" fill="#a9aec4" />
<rect x="561.9000000000001" y="67.0" width="1.6" height="1.6" fill="#a9aec4" />
<path d="M569.5 57.5 L574 57.5 L575.5 59.3 L583.5 59.3 L583.5 66.5 L569.5 66.5 Z" fill="url(#fold)" stroke="#b47a1c" stroke-width="1" />
<circle cx="576.6" cy="54.4" r="3.5" fill="#6d73c4" stroke="#3d438a" stroke-width="0.8" />
<circle cx="581.6" cy="56.6" r="3.2" fill="#4f9a4a" stroke="#2a6a2a" stroke-width="0.8" />
<path d="M592 57.5 L596.5 57.5 L598 59.3 L606 59.3 L606 66.5 L592 66.5 Z" fill="url(#fold)" stroke="#b47a1c" stroke-width="1" />
<rect x="597.5" y="54" width="9" height="6.5" fill="#f4f4fa" stroke="#8a8fb0" stroke-width="0.9"/>
<rect x="597.5" y="54" width="9" height="1.8" fill="#a9add6" />
<path d="M616.5 65.5 L624 57 L627.5 60 L620 68 Z" fill="#b9a9b4" stroke="#6a5a66" stroke-width="0.8" />
<path d="M623.5 56.5 L628.5 51.5 L633 55.5 L628 61 Z" fill="#f4d66a" stroke="#a9862a" stroke-width="0.8" />
<path d="M639.8 57 L647.0 57 L643.4 61.2 Z" fill="#111" stroke="none" stroke-width="1" />
<rect x="653.2" y="49" width="1.6" height="1.6" fill="#a9aec4" />
<rect x="653.2" y="52.6" width="1.6" height="1.6" fill="#a9aec4" />
<rect x="653.2" y="56.2" width="1.6" height="1.6" fill="#a9aec4" />
<rect x="653.2" y="59.800000000000004" width="1.6" height="1.6" fill="#a9aec4" />
<rect x="653.2" y="63.400000000000006" width="1.6" height="1.6" fill="#a9aec4" />
<rect x="653.2" y="67.0" width="1.6" height="1.6" fill="#a9aec4" />
<path d="M666 50.5 L671 50.5 L671 57 L674 57 L668.5 63.5 L663 57 L666 57 Z" fill="url(#yel)" stroke="#a9861c" stroke-width="1" />
<rect x="665.5" y="64.6" width="5.5" height="2.4" fill="#3a4f8a" />
<rect x="675.3" y="52.0" width="1.4" height="1.6" fill="#8a93b8" />
<rect x="675.3" y="55.6" width="1.4" height="1.6" fill="#8a93b8" />
<rect x="675.3" y="59.2" width="1.4" height="1.6" fill="#8a93b8" />
<rect x="675.3" y="62.8" width="1.4" height="1.6" fill="#8a93b8" />
<line x1="677.5" y1="51" x2="677.5" y2="67" stroke="#9aa0b8" stroke-width="0.8" />
<path d="M684.4 57 L691.6 57 L688 61.2 Z" fill="#111" stroke="none" stroke-width="1" />
<path d="M704.5 67 L709.5 67 L709.5 60.5 L712.5 60.5 L707 54 L701.5 60.5 L704.5 60.5 Z" fill="url(#yel)" stroke="#a9861c" stroke-width="1" />
<rect x="704" y="50.5" width="5.5" height="2.2" fill="#3a4f8a" />
<rect x="713.3" y="52.0" width="1.4" height="1.6" fill="#8a93b8" />
<rect x="713.3" y="55.6" width="1.4" height="1.6" fill="#8a93b8" />
<rect x="713.3" y="59.2" width="1.4" height="1.6" fill="#8a93b8" />
<rect x="713.3" y="62.8" width="1.4" height="1.6" fill="#8a93b8" />
<line x1="715.5" y1="51" x2="715.5" y2="67" stroke="#9aa0b8" stroke-width="0.8" />
<path d="M724.6999999999999 57 L731.9 57 L728.3 61.2 Z" fill="#111" stroke="none" stroke-width="1" />
<path d="M756 56 L749 56 L749 53 L742.5 59 L749 65 L749 62 L756 62 Z" fill="url(#yel)" stroke="#a9861c" stroke-width="1" />
<path d="M741 52 L745 56 M745 52 L741 56 M743 51.3 L743 56.7 M740.3 54 L745.7 54" fill="none" stroke="#333a5a" stroke-width="0.8" />
<path d="M779.5 56 L772 56 L772 52.6 L765 59 L772 65.4 L772 62 L779.5 62 Z" fill="url(#yel)" stroke="#a9861c" stroke-width="1" />
<path d="M787.8 57 L795.0 57 L791.4 61.2 Z" fill="#111" stroke="none" stroke-width="1" />
<path d="M805.5 56 L813 56 L813 52.6 L820 59 L813 65.4 L813 62 L805.5 62 Z" fill="#f4f4f8" stroke="#b9bcc8" stroke-width="1" />
<path d="M827.4 57 L834.6 57 L831 61.2 Z" fill="#8a8d98" stroke="none" stroke-width="1" />
<path d="M704.5 82 L711.5 89 M711.5 82 L704.5 89" fill="none" stroke="#b5b7bf" stroke-width="3.2" />
<path d="M712 88 L719.5 95.5 M719.5 88 L712 95.5" fill="none" stroke="#adafb7" stroke-width="3.2" />
<line x1="725.5" y1="80" x2="725.5" y2="103" stroke="#777a86" stroke-width="1" />
<path d="M735 88.5 L744 88.5 M740.5 85.5 L744.5 88.5 L740.5 91.5" fill="none" stroke="#c6c8d0" stroke-width="1.2" />
<line x1="756.5" y1="80" x2="756.5" y2="103" stroke="#777a86" stroke-width="1" />
<circle cx="769.5" cy="85.5" r="3" fill="#b9bbc3" stroke="none" stroke-width="1" />
<circle cx="776" cy="87.5" r="3" fill="#c3c5cc" stroke="none" stroke-width="1" />
<circle cx="771.5" cy="92" r="3.2" fill="#a9abb3" stroke="none" stroke-width="1" />
<path d="M797 84.5 L807.5 84.5 L802.2 89 Z" fill="#fff" stroke="#4f5560" stroke-width="1" />
<rect x="817.5" y="84.5" width="9.5" height="3" fill="#fff" stroke="#4f5560" stroke-width="1"/>
<rect x="840.5" y="84.5" width="9" height="9" fill="#fff" stroke="#4f5560" stroke-width="1"/>
<line x1="840.5" y1="87" x2="849.5" y2="87" stroke="#4f5560" stroke-width="1" />
<path d="M966.8 88.0 L968.5 86.3 L972.0 89.8 L975.5 86.3 L977.2 88.0 L973.7 91.5 L977.2 95.0 L975.5 96.7 L972.0 93.2 L968.5 96.7 L966.8 95.0 L970.3 91.5 Z" fill="#fdfdfe" stroke="#6a6a6a" stroke-width="0.9" />
<circle cx="993.5" cy="88.5" r="2.8" fill="#b9bbc6" stroke="none" stroke-width="1" />
<circle cx="999" cy="93" r="3" fill="#8fb4d8" stroke="none" stroke-width="1" />
<rect x="1686" y="88" width="10" height="8" fill="#f4f4f8" stroke="#c9cbd6" stroke-width="0.8"/>
<rect x="1700" y="86" width="22" height="12" fill="#cfdcf0" stroke="#9ab4dc" stroke-width="0.8"/>
<rect x="1714" y="92" width="4" height="4" fill="#e04858" />
<rect x="1327.5" y="302.5" width="9.5" height="3" fill="#fff" stroke="#4f5560" stroke-width="1"/>
<rect x="1350.5" y="302.5" width="9" height="9" fill="#fff" stroke="#4f5560" stroke-width="1"/>
<line x1="1350.5" y1="305" x2="1359.5" y2="305" stroke="#4f5560" stroke-width="1" />
<rect x="1385.5" y="303.5" width="4.5" height="4.5" fill="#fff" stroke="#2d6fb8" stroke-width="1.2"/>
<rect x="1385.5" y="312" width="4.5" height="4.5" fill="#fff" stroke="#2d6fb8" stroke-width="1.2"/>
<rect x="1392.5" y="304.5" width="5" height="1.4" fill="#2d6fb8" />
<rect x="1392.5" y="308.5" width="3.5" height="1.4" fill="#2d6fb8" />
<rect x="1392.5" y="312.5" width="5" height="1.4" fill="#2d6fb8" />
<rect x="1392.5" y="316" width="3.5" height="1.4" fill="#2d6fb8" />
<path d="M1464.5 306.9 L1466.2 305.2 L1469.7 308.7 L1473.2 305.2 L1474.9 306.9 L1471.4 310.4 L1474.9 313.9 L1473.2 315.6 L1469.7 312.1 L1466.2 315.6 L1464.5 313.9 L1468.0 310.4 Z" fill="#fdfdfe" stroke="#6a6a6a" stroke-width="0.9" />
<circle cx="1662" cy="306" r="2.8" fill="#c6c8d0" stroke="none" stroke-width="1" />
<circle cx="1668" cy="307.5" r="2.8" fill="#cfd1d8" stroke="none" stroke-width="1" />
<circle cx="1664" cy="311" r="3" fill="#b9bbc3" stroke="none" stroke-width="1" />
<path d="M1683 301 L1683 313 M1680 310 L1683 313.5 L1686 310" fill="none" stroke="#222" stroke-width="1.4" />
<text x="1687.5" y="307" font-size="10" fill="#2a5fb8" font-family='"Liberation Sans","Noto Sans CJK SC",sans-serif' font-weight="bold">a</text>
<text x="1688.5" y="316" font-size="10" fill="#a0409a" font-family='"Liberation Sans","Noto Sans CJK SC",sans-serif' font-weight="bold">z</text>
<path d="M1706 302.5 L1717 313.5 M1717 302.5 L1706 313.5 M1708.5 305 L1708.5 302.5 M1708.5 305 L1706 305 M1714.5 305 L1717 305 M1714.5 305 L1714.5 302.5 M1708.5 311 L1706 311 M1708.5 311 L1708.5 313.5 M1714.5 311 L1714.5 313.5 M1714.5 311 L1717 311" fill="none" stroke="#222" stroke-width="1.1" />
<rect x="1709.5" y="306" width="4" height="4" fill="#fff" stroke="#222" stroke-width="1"/>
<path d="M1727.5 302 L1724 302 L1724 314 L1727.5 314" fill="none" stroke="#222" stroke-width="1.4" />
<path d="M-0.5 674.0 L1.2 672.3 L4.2 675.3 L7.3 672.3 L9.0 674.0 L6.0 677.0 L9.0 680.1 L7.3 681.8 L4.2 678.8 L1.2 681.8 L-0.5 680.1 L2.5 677.0 Z" fill="#fdfdfe" stroke="#6a6a6a" stroke-width="0.9" />
<rect x="23" y="671.5" width="12" height="10.5" fill="#eef3fa" stroke="#b4c3dc" stroke-width="1"/>
<path d="M22 676 L25.5 680 L30 672.5" fill="none" stroke="#7fa9dc" stroke-width="1.6" />
<rect x="29" y="675" width="5" height="1.2" fill="#b4c3dc" />
<rect x="29" y="678" width="5" height="1.2" fill="#b4c3dc" />
<rect x="1387" y="668" width="16" height="11.5" fill="#111" />
<path d="M1389.5 671 L1393 674 L1389.5 677" fill="none" stroke="#fff" stroke-width="1.3" />
<path d="M1410.4 672 L1417.6 672 L1414 676.2 Z" fill="#111" stroke="none" stroke-width="1" />
<rect x="1429.5" y="669.5" width="10" height="10" fill="#e9323c" stroke="#b3121c" stroke-width="1"/>
<path d="M1452.5 669 L1462 679 M1462 669 L1452.5 679" fill="none" stroke="#acaeb6" stroke-width="3.4" />
<path d="M1474 668 L1481.5 675.5 M1481.5 668 L1474 675.5" fill="none" stroke="#b9bbc3" stroke-width="3" />
<path d="M1479.5 673.5 L1487 681 M1487 673.5 L1479.5 681" fill="none" stroke="#b1b3bb" stroke-width="3" />
<rect x="1497.5" y="668.5" width="9.5" height="9.5" fill="#e9323c" stroke="#b3121c" stroke-width="1"/>
<path d="M1504 676 L1509 679.5 L1506 682 L1502.5 678 Z" fill="#f4d66a" stroke="#a9862a" stroke-width="0.8" />
<rect x="1519.5" y="667.5" width="9" height="9" fill="#e9323c" stroke="#b3121c" stroke-width="1"/>
<rect x="1524" y="672" width="9.5" height="9.5" fill="#e9323c" stroke="#b3121c" stroke-width="1"/>
<line x1="1541.5" y1="664" x2="1541.5" y2="685" stroke="#777a86" stroke-width="1" />
<rect x="1551.5" y="667.5" width="8" height="11" fill="#f7f7fa" stroke="#9a9ca8" stroke-width="0.9"/>
<rect x="1553" y="669.5" width="5" height="1" fill="#9a9ca8" />
<rect x="1553" y="671.8" width="5" height="1" fill="#9a9ca8" />
<rect x="1553" y="674.1" width="5" height="1" fill="#9a9ca8" />
<rect x="1553" y="676.4" width="5" height="1" fill="#9a9ca8" />
<path d="M1558.5 675.5 L1563.5 680.5 M1563.5 675.5 L1558.5 680.5" fill="none" stroke="#7a7c88" stroke-width="1.6" />
<rect x="1574.5" y="673.5" width="6.5" height="6.5" fill="#e9b83a" stroke="#9a7a1a" stroke-width="0.9"/>
<path d="M1575.8 673.5 L1575.8 671.5 Q1577.8 668.5 1579.8 671.5 L1579.8 673.5" fill="none" stroke="#8a7a3a" stroke-width="1.1" />
<rect x="1582.5" y="667.5" width="5" height="12.5" fill="#f4f4fa" stroke="#7a7c9a" stroke-width="0.9"/>
<rect x="1583.5" y="670" width="3" height="2" fill="#4a5fa8" />
<rect x="1583.5" y="675" width="3" height="2" fill="#4a5fa8" />
<rect x="1597.5" y="668.5" width="8" height="10" fill="#f7f7fa" stroke="#b4b6c3" stroke-width="0.9"/>
<rect x="1599" y="670.5" width="5" height="1" fill="#b4b6c3" />
<rect x="1599" y="672.9" width="5" height="1" fill="#b4b6c3" />
<rect x="1599" y="675.3" width="5" height="1" fill="#b4b6c3" />
<path d="M1603 676.5 L1608 676.5 L1608 672 M1605 674.5 L1603 676.5 L1605 678.5" fill="none" stroke="#d6b84a" stroke-width="1.3" />
<rect x="1616.5" y="664.5" width="22.5" height="19.5" fill="#c4dcf8" stroke="#a8c8f0" stroke-width="1"/>
<rect x="1639.5" y="664.5" width="22.5" height="19.5" fill="#c4dcf8" stroke="#a8c8f0" stroke-width="1"/>
<rect x="1622.5" y="668.5" width="10.5" height="7" fill="#fff" stroke="#6a7a9a" stroke-width="1"/>
<rect x="1624.5" y="670.5" width="6.5" height="1" fill="#6a88b8" />
<rect x="1624.5" y="672.8" width="4.5" height="1" fill="#6a88b8" />
<rect x="1619.5" y="673.5" width="6" height="4.5" fill="#e4ecf8" stroke="#4a7ab8" stroke-width="0.9"/>
<rect x="1620.5" y="679" width="4" height="1" fill="#4a7ab8" />
<rect x="1645.5" y="668.5" width="10.5" height="7" fill="#fff" stroke="#6a7a9a" stroke-width="1"/>
<rect x="1647.5" y="670.5" width="6.5" height="1" fill="#c83848" />
<rect x="1647.5" y="672.8" width="4.5" height="1" fill="#c83848" />
<rect x="1642.5" y="673.5" width="6" height="4.5" fill="#e4ecf8" stroke="#4a7ab8" stroke-width="0.9"/>
<rect x="1643.5" y="679" width="4" height="1" fill="#4a7ab8" />
<line x1="1664.5" y1="664" x2="1664.5" y2="685" stroke="#777a86" stroke-width="1" />
<rect x="1673.5" y="672.5" width="11" height="8.5" fill="#f4f7fc" stroke="#4a7ab8" stroke-width="1"/>
<path d="M1681 672 L1686.5 667.5 L1688.5 670 L1683 674 Z" fill="#3a9a4a" stroke="#1f6a2a" stroke-width="0.8" />
<rect x="1699.5" y="668.5" width="11" height="8" fill="#f4f4f8" stroke="#8a8d98" stroke-width="1.2"/>
<rect x="1702" y="671" width="6" height="1" fill="#8a8d98" />
<rect x="1702" y="673.2" width="4" height="1" fill="#8a8d98" />
<rect x="1702.5" y="678.5" width="5" height="1.6" fill="#8a8d98" />
<path d="M1719.4 672 L1726.6 672 L1723 676.2 Z" fill="#6a6d78" stroke="none" stroke-width="1" />
<rect x="1189.5" y="1024.5" width="27" height="22" fill="#e6e9f6" stroke="#c3c7d8" stroke-width="1"/>
<circle cx="1197.5" cy="1033" r="3.6" fill="#f4e6a0" stroke="#b4a04a" stroke-width="0.9" />
<rect x="1198.5" y="1031.5" width="9" height="7" fill="#f4f6fa" stroke="#6a7a98" stroke-width="1"/>
<rect x="1200.5" y="1040" width="5" height="1.4" fill="#6a7a98" />
<rect x="1704.7" y="49" width="1.6" height="1.6" fill="#8a8fa8" />
<rect x="1704.7" y="52.6" width="1.6" height="1.6" fill="#8a8fa8" />
<rect x="1704.7" y="56.2" width="1.6" height="1.6" fill="#8a8fa8" />
<rect x="1704.7" y="59.800000000000004" width="1.6" height="1.6" fill="#8a8fa8" />
<rect x="1704.7" y="63.400000000000006" width="1.6" height="1.6" fill="#8a8fa8" />
<rect x="1704.7" y="67.0" width="1.6" height="1.6" fill="#8a8fa8" />
<line x1="1713.5" y1="44" x2="1713.5" y2="74" stroke="#d6d9e8" stroke-width="1" />
<rect x="1719.5" y="55.5" width="10" height="10" fill="#f4e6a0" stroke="#4a6fb8" stroke-width="1.2"/>
<rect x="1719.5" y="55.5" width="10" height="3" fill="#4a6fb8" />
<rect x="1626" y="68" width="110" height="22" fill="#000" opacity="0.25" filter="url(#ish)"/>
<rect x="1625" y="66.5" width="110" height="22" fill="#fdfdfe" />
<g transform="rotate(-14 1617 77)"><rect x="1605.5" y="65.5" width="23" height="23" rx="3.5" fill="#ee4a1c"/></g>
<text x="1617.2" y="86.3" font-size="25" fill="#ffffff" font-family='"Liberation Sans","Noto Sans CJK SC",sans-serif' text-anchor="middle" font-weight="bold" font-style="italic" transform="rotate(-8 1617 77)">S</text>
<text x="1636.3" y="82.6" font-size="15.5" fill="#2470c4" font-family='"Noto Sans CJK SC",sans-serif' font-weight="bold">中</text>
<circle cx="1661.5" cy="72.8" r="1.5" fill="none" stroke="#2470c4" stroke-width="1.2" />
<path d="M1669 78.5 Q1671.5 79 1670.5 81.5 Q1670 83 1668 83.6" fill="none" stroke="#2470c4" stroke-width="2" stroke-linecap="round"/>
<circle cx="1688" cy="76.8" r="7.2" fill="none" stroke="#2470c4" stroke-width="1.7" />
<circle cx="1685.3" cy="74.6" r="1.1" fill="#2470c4" stroke="none" stroke-width="1" />
<circle cx="1690.7" cy="74.6" r="1.1" fill="#2470c4" stroke="none" stroke-width="1" />
<path d="M1684 78.6 Q1688 82.6 1692 78.6" fill="none" stroke="#2470c4" stroke-width="1.5" />
<rect x="1706.8" y="69.5" width="6" height="10" fill="#2470c4" rx="3"/>
<path d="M1704.5 76.5 Q1704.5 82.5 1709.8 82.5 Q1715 82.5 1715 76.5 M1709.8 82.5 L1709.8 85 M1706.5 85.3 L1713 85.3" fill="none" stroke="#2470c4" stroke-width="1.5" />
<rect x="1724.5" y="70.5" width="8" height="12" fill="none" stroke="#2470c4" stroke-width="1.8" rx="1.5"/>
<line x1="1724.5" y1="76.5" x2="1730" y2="76.5" stroke="#2470c4" stroke-width="1.6" />
<rect x="67" y="194" width="382" height="535" fill="#000" opacity="0.2" filter="url(#wsh2)"/>
<rect x="69.5" y="192.5" width="376" height="532" fill="#ffffff" stroke="#8d8d8d" stroke-width="1"/>
<rect x="70" y="224" width="375" height="500" fill="#000000" />
<rect x="77.5" y="200.5" width="14.5" height="12" fill="#eef2f2" stroke="#b9bfc2" stroke-width="1"/>
<rect x="79" y="203" width="6" height="8.5" fill="#6f9fb0" />
<rect x="86" y="203" width="5" height="3.5" fill="#dfe6e8" />
<text x="98.6" y="211.6" font-size="12" fill="#9c9c9c" font-family='"Liberation Sans","Noto Sans CJK SC",sans-serif' textLength="36.4" lengthAdjust="spacing" >Edged</text>
<line x1="325.5" y1="207.5" x2="337.5" y2="207.5" stroke="#8c8c8c" stroke-width="1" />
<rect x="371.5" y="202.5" width="9.5" height="9.5" fill="none" stroke="#8c8c8c" stroke-width="1"/>
<path d="M417 202 L427 212 M427 202 L417 212" fill="none" stroke="#8c8c8c" stroke-width="1" />
<path d="M127 279 L399.5 295.8 L404 345 L431.5 648.4 L132 680.5 L130 444 L128.2 323 Z" fill="none" stroke="#ffffff" stroke-width="1.1" stroke-linejoin="round"/>
<circle cx="141.4" cy="323.4" r="5.3" fill="none" stroke="#ffffff" stroke-width="1.1" />
<circle cx="144.4" cy="470" r="5.3" fill="none" stroke="#ffffff" stroke-width="1.1" />
<circle cx="145.6" cy="629.7" r="5.3" fill="none" stroke="#ffffff" stroke-width="1.1" />
<path d="M215 510 L352 504.5 L352 513 L215 519.5 Z" fill="none" stroke="#ffffff" stroke-width="1.1" />
<path d="M254 452.8 L262 452.8 L262 456.5 L254 456.5 Z M264 453.5 L269 452.8 L269 456 L264 456.3 Z" fill="none" stroke="#ffffff" stroke-width="1" />
<path d="M231 559.3 L240.5 559.3 L240.5 563.6 L231 563.6 Z" fill="none" stroke="#ffffff" stroke-width="1" />
<rect x="736" y="193" width="386" height="540" fill="#000" opacity="0.26" filter="url(#wsh)"/>
<rect x="740.5" y="193.5" width="377" height="531.5" fill="#ffffff" stroke="#3c84d6" stroke-width="1.2"/>
<rect x="749.5" y="201.5" width="14.5" height="12" fill="#eef2f2" stroke="#aab0b4" stroke-width="1"/>
<rect x="751" y="204" width="6" height="8.5" fill="#4f8fa8" />
<rect x="758" y="204" width="5" height="3.5" fill="#d6dfe2" />
<text x="770.8" y="212.6" font-size="12" fill="#000" font-family='"Liberation Sans","Noto Sans CJK SC",sans-serif' textLength="35.7" lengthAdjust="spacing" >Image</text>
<line x1="998" y1="208.5" x2="1008.5" y2="208.5" stroke="#000" stroke-width="1.2" />
<rect x="1043.5" y="203.5" width="9.5" height="9.5" fill="none" stroke="#000" stroke-width="1.2"/>
<path d="M1089 203 L1099 213 M1099 203 L1089 213" fill="none" stroke="#000" stroke-width="1.2" />
<g clip-path="url(#phc)">
<rect x="741" y="224" width="376" height="500" fill="url(#wood)" />
<rect x="741" y="224" width="376" height="500" fill="url(#glare)" />
<rect x="741" y="224" width="376" height="500" fill="#000" filter="url(#grain)" opacity="0.42"/>
<path d="M804 682.5 L1104 650 L1104.5 653.5 L808 687 Z" fill="#2a1c14" stroke="none" stroke-width="1" opacity="0.35" filter="url(#blur1)"/>
<path d="M799 280 L1072.2 297.6 L1076 338 L1103.5 648.7 L804 681.4 L802.5 450 Z" fill="url(#paper)" stroke="none" stroke-width="1" />
<path d="M799 280 L1072.2 297.6 L1076 338 L1103.5 648.7 L804 681.4 L802.5 450 Z" fill="url(#paperv)" stroke="none" stroke-width="1" />
<circle cx="813.6" cy="324.2" r="5.0" fill="#574232" stroke="#46332a" stroke-width="1.2" />
<circle cx="816.4" cy="471" r="5.0" fill="#574232" stroke="#46332a" stroke-width="1.2" />
<circle cx="817.5" cy="630.4" r="5.0" fill="#574232" stroke="#46332a" stroke-width="1.2" />
<text x="899" y="346.11" font-size="3.6" fill="#6d6463" font-family='"Liberation Serif","Noto Serif CJK SC",serif' textLength="94" lengthAdjust="spacing" transform="rotate(1.08 899 346.11)" filter="url(#blur1)">4.1 ACCESSING AND MANIPULATING PIXELS</text>
<text x="887" y="359.06" font-size="5.05" fill="#453d3b" font-family='"Liberation Serif","Noto Serif CJK SC",serif' textLength="123.4" lengthAdjust="spacing" transform="rotate(0.87 887 359.06)" filter="url(#blur1)">On Line 14 we manipulate the top-left pixel in the im-</text>
<text x="882" y="365.74" font-size="5.05" fill="#453d3b" font-family='"Liberation Serif","Noto Serif CJK SC",serif' textLength="128.4" lengthAdjust="spacing" transform="rotate(0.77 882 365.74)" filter="url(#blur1)">age, which is located at coordinate (0,0) and set it to have</text>
<text x="882" y="372.26" font-size="5.05" fill="#453d3b" font-family='"Liberation Serif","Noto Serif CJK SC",serif' textLength="128.4" lengthAdjust="spacing" transform="rotate(0.66 882 372.26)" filter="url(#blur1)">a value of (0, 0, 255). If we were reading this pixel value</text>
<text x="882" y="378.68" font-size="5.05" fill="#453d3b" font-family='"Liberation Serif","Noto Serif CJK SC",serif' textLength="128.4" lengthAdjust="spacing" transform="rotate(0.55 882 378.68)" filter="url(#blur1)">in RGB format, we would have a value of 0 for red, 0 for</text>
<text x="882" y="385.22" font-size="5.05" fill="#453d3b" font-family='"Liberation Serif","Noto Serif CJK SC",serif' textLength="125" lengthAdjust="spacing" transform="rotate(0.44 882 385.22)" filter="url(#blur1)">green, and 255 for blue, thus making it a pure blue color.</text>
<text x="888" y="398.26" font-size="5.05" fill="#453d3b" font-family='"Liberation Serif","Noto Serif CJK SC",serif' textLength="124" lengthAdjust="spacing" transform="rotate(0.22 888 398.26)" filter="url(#blur1)">However, as I mentioned above, we need to take special</text>
<text x="883" y="404.77" font-size="5.05" fill="#453d3b" font-family='"Liberation Serif","Noto Serif CJK SC",serif' textLength="129" lengthAdjust="spacing" transform="rotate(0.11 883 404.77)" filter="url(#blur1)">care when working with OpenCV. Our pixels are actually</text>
<text x="883" y="411.2" font-size="5.05" fill="#453d3b" font-family='"Liberation Serif","Noto Serif CJK SC",serif' textLength="87" lengthAdjust="spacing" transform="rotate(0.00 883 411.20)" filter="url(#blur1)">stored in BGR format, not RGB format.</text>
<text x="889.3" y="423.74" font-size="5.05" fill="#453d3b" font-family='"Liberation Serif","Noto Serif CJK SC",serif' textLength="124.7" lengthAdjust="spacing" transform="rotate(-0.22 889.3 423.74)" filter="url(#blur1)">We actually read this pixel as 255 for red, 0 for green, and</text>
<text x="884" y="430.52" font-size="5.05" fill="#453d3b" font-family='"Liberation Serif","Noto Serif CJK SC",serif' textLength="109" lengthAdjust="spacing" transform="rotate(-0.34 884 430.52)" filter="url(#blur1)">0 for blue, making it a red color, not a blue color.</text>
<text x="891" y="444.34" font-size="5.05" fill="#453d3b" font-family='"Liberation Serif","Noto Serif CJK SC",serif' textLength="125.4" lengthAdjust="spacing" transform="rotate(-0.59 891 444.34)" filter="url(#blur1)">After setting the top-left pixel to have a red color on Line</text>
<text x="885" y="451.22" font-size="5.05" fill="#453d3b" font-family='"Liberation Serif","Noto Serif CJK SC",serif' textLength="131.4" lengthAdjust="spacing" transform="rotate(-0.71 885 451.22)" filter="url(#blur1)">14, we then grab the pixel value and print it back to con-</text>
<text x="885" y="457.34" font-size="5.05" fill="#453d3b" font-family='"Liberation Serif","Noto Serif CJK SC",serif' textLength="131" lengthAdjust="spacing" transform="rotate(-0.82 885 457.34)" filter="url(#blur1)">sole on Lines 15 and 16, just to demonstrate that we have</text>
<text x="885" y="463.94" font-size="5.05" fill="#453d3b" font-family='"Liberation Serif","Noto Serif CJK SC",serif' textLength="114" lengthAdjust="spacing" transform="rotate(-0.95 885 463.94)" filter="url(#blur1)">indeed successfully changed the color of the pixel.</text>
<text x="891" y="478.08" font-size="5.05" fill="#453d3b" font-family='"Liberation Serif","Noto Serif CJK SC",serif' textLength="130.3" lengthAdjust="spacing" transform="rotate(-1.21 891 478.08)" filter="url(#blur1)">Accessing and setting a single pixel value is simple enough,</text>
<text x="885.7" y="485.07" font-size="5.05" fill="#453d3b" font-family='"Liberation Serif","Noto Serif CJK SC",serif' textLength="134.3" lengthAdjust="spacing" transform="rotate(-1.34 885.7 485.07)" filter="url(#blur1)">but what if we wanted to use NumPy's array slicing capa-</text>
<text x="885.7" y="491.7" font-size="5.05" fill="#453d3b" font-family='"Liberation Serif","Noto Serif CJK SC",serif' textLength="132.9" lengthAdjust="spacing" transform="rotate(-1.47 885.7 491.70)" filter="url(#blur1)">bilities to access larger rectangular portions of the image?</text>
<text x="885.7" y="498.7" font-size="5.05" fill="#453d3b" font-family='"Liberation Serif","Noto Serif CJK SC",serif' textLength="114.1" lengthAdjust="spacing" transform="rotate(-1.61 885.7 498.70)" filter="url(#blur1)">The code below demonstrates how we can do this:</text>
<path d="M887 512.3 L1023.4 506 L1023.4 513 L887 519.4 Z" fill="#6b625f" stroke="none" stroke-width="1" />
<text x="889" y="517.06" font-size="4.2" fill="#cfc6c2" font-family='"Liberation Serif","Noto Serif CJK SC",serif' textLength="67" lengthAdjust="spacing" transform="rotate(-1.99 889 517.06)" filter="url(#blur1)">Listing 4.3: getting_and_setting.py</text>
<text x="888.4" y="522.54" font-size="4.0" fill="#776d6a" font-family='"Liberation Mono","Noto Sans CJK SC",monospace' textLength="62.0" lengthAdjust="spacing" transform="rotate(-2.10 888.4 522.54)" filter="url(#blur1)">17 corner = image[0:100, 0:100]</text>
<text x="888.4" y="527.65" font-size="4.0" fill="#776d6a" font-family='"Liberation Mono","Noto Sans CJK SC",monospace' textLength="62.0" lengthAdjust="spacing" transform="rotate(-2.20 888.4 527.65)" filter="url(#blur1)">18 cv2.imshow("Corner", corner)</text>
<text x="888.4" y="532.89" font-size="4.0" fill="#776d6a" font-family='"Liberation Mono","Noto Sans CJK SC",monospace' textLength="4.0" lengthAdjust="spacing" transform="rotate(-2.33 888.4 532.89)" filter="url(#blur1)">19</text>
<text x="888.4" y="537.84" font-size="4.0" fill="#776d6a" font-family='"Liberation Mono","Noto Sans CJK SC",monospace' textLength="72.0" lengthAdjust="spacing" transform="rotate(-2.41 888.4 537.84)" filter="url(#blur1)">20 image[0:100, 0:100] = (0, 255, 0)</text>
<text x="888.4" y="543.0" font-size="4.0" fill="#776d6a" font-family='"Liberation Mono","Noto Sans CJK SC",monospace' textLength="4.0" lengthAdjust="spacing" transform="rotate(-2.54 888.4 543.00)" filter="url(#blur1)">21</text>
<text x="888.4" y="548.07" font-size="4.0" fill="#776d6a" font-family='"Liberation Mono","Noto Sans CJK SC",monospace' textLength="62.0" lengthAdjust="spacing" transform="rotate(-2.62 888.4 548.07)" filter="url(#blur1)">22 cv2.imshow("Updated", image)</text>
<text x="888.4" y="553.15" font-size="4.0" fill="#776d6a" font-family='"Liberation Mono","Noto Sans CJK SC",monospace' textLength="34.0" lengthAdjust="spacing" transform="rotate(-2.74 888.4 553.15)" filter="url(#blur1)">23 cv2.waitKey(0)</text>
<text x="895" y="563.5" font-size="5.7" fill="#453d3b" font-family='"Liberation Serif","Noto Serif CJK SC",serif' textLength="130.3" lengthAdjust="spacing" transform="rotate(-2.90 895 563.50)" filter="url(#blur1)">On line 17 we grab a 100 x 100 pixel region of the image.</text>
<text x="889.2" y="571.13" font-size="5.7" fill="#453d3b" font-family='"Liberation Serif","Noto Serif CJK SC",serif' textLength="136.1" lengthAdjust="spacing" transform="rotate(-3.06 889.2 571.13)" filter="url(#blur1)">In fact, this is the top-left corner of the image! In order to</text>
<text x="889.2" y="578.82" font-size="5.7" fill="#453d3b" font-family='"Liberation Serif","Noto Serif CJK SC",serif' textLength="136.1" lengthAdjust="spacing" transform="rotate(-3.22 889.2 578.82)" filter="url(#blur1)">grab chunks of an image, NumPy expects we provide four</text>
<text x="958.5" y="598.66" font-size="4.2" fill="#453d3b" font-family='"Liberation Serif","Noto Serif CJK SC",serif' textLength="5.0" lengthAdjust="spacing" transform="rotate(-3.73 958.5 598.66)" filter="url(#blur1)">24</text>
</g>
<rect x="390" y="1062" width="32" height="18" fill="#3a3c44" />
<rect x="170" y="1078" width="28.69999999999999" height="2" fill="#8ab9e6" />
<rect x="206.7" y="1078" width="28.30000000000001" height="2" fill="#8ab9e6" />
<rect x="244.3" y="1078" width="27.5" height="2" fill="#8ab9e6" />
<rect x="281" y="1078" width="27.80000000000001" height="2" fill="#8ab9e6" />
<rect x="318" y="1078" width="27.69999999999999" height="2" fill="#8ab9e6" />
<rect x="355" y="1078" width="27.600000000000023" height="2" fill="#8ab9e6" />
<rect x="390" y="1078" width="31.5" height="2" fill="#8ab9e6" />
<rect x="-3" y="1058" width="6.5" height="12.5" fill="none" stroke="#ffffff" stroke-width="1.3"/>
<path d="M5.5 1059.5 L7 1059.5 L7 1069 L5.5 1069" fill="none" stroke="#ffffff" stroke-width="1.2" />
<text x="27.4" y="1072.4" font-size="25" fill="#1e82d8" font-family='"Liberation Sans","Noto Sans CJK SC",sans-serif' textLength="15" lengthAdjust="spacingAndGlyphs" font-weight="bold">e</text>
<path d="M28.5 1067 Q27.5 1059 34 1057.3" fill="none" stroke="#1e82d8" stroke-width="2.2" />
<path d="M65.5 1061.5 L79.5 1061.5 L79.5 1072 L65.5 1072 Z" fill="#ffffff" stroke="none" stroke-width="1" />
<path d="M69.5 1061.5 Q69.5 1057.3 72.5 1057.3 Q75.5 1057.3 75.5 1061.5" fill="none" stroke="#ffffff" stroke-width="1.2" />
<rect x="69" y="1063.3" width="3" height="3" fill="#f25022" />
<rect x="73" y="1063.3" width="3" height="3" fill="#7fba00" />
<rect x="69" y="1067.3" width="3" height="3" fill="#00a4ef" />
<rect x="73" y="1067.3" width="3" height="3" fill="#ffb900" />
<path d="M102 1062 L110 1057.5 L118 1062 L118 1071 L102 1071 Z" fill="#ffffff" stroke="none" stroke-width="1" />
<path d="M104.5 1062.3 L115.8 1062.3 L112.5 1066.5 L114 1068.8 L109.5 1066 Z" fill="#0a0c14" stroke="none" stroke-width="1" />
<rect x="139" y="1057" width="16" height="16" fill="#f6f8fd" rx="2"/>
<path d="M141 1060 L147 1063 L152.5 1058.5 L151 1064.5 L154.5 1066.5 L150.5 1067 L149 1072 L146.5 1067 L142 1069.5 L145 1065 Z" fill="#2a72d8" stroke="none" stroke-width="1" />
<circle cx="183.8" cy="1065" r="7.4" fill="#5cb82a" stroke="#8fd85a" stroke-width="0.8" />
<text x="183.8" y="1069.6" font-size="14.5" fill="#ffffff" font-family='"Liberation Sans","Noto Sans CJK SC",sans-serif' text-anchor="middle" font-weight="bold">e</text>
<path d="M213 1059 L218.5 1059 L220 1060.8 L229 1060.8 L229 1071 L213 1071 Z" fill="#f7d877" stroke="none" stroke-width="1" />
<rect x="213" y="1062.2" width="16" height="2" fill="#fbe9a8" />
<path d="M216.5 1071.4 L216.5 1067.2 Q221 1064.2 225.5 1067.2 L225.5 1071.4 L223 1071.4 L223 1068.6 L219 1068.6 L219 1071.4 Z" fill="#3a9ae0" stroke="none" stroke-width="1" />
<rect x="251" y="1058" width="14" height="14" fill="#56b41c" rx="1.2"/>
<path d="M261.5 1061.3 L255 1061.3 L255 1068.8 L261.5 1068.8" fill="none" stroke="#ffffff" stroke-width="2.2" />
<circle cx="295.8" cy="1065" r="6.4" fill="#2c2255" stroke="none" stroke-width="1" />
<path d="M291.2 1059.8 Q287.6 1065 291.2 1070.2" fill="none" stroke="#f0982a" stroke-width="1.3" />
<rect x="291" y="1062.0" width="10.5" height="1.3" fill="#ffffff" />
<rect x="291" y="1064.4" width="10.5" height="1.3" fill="#ffffff" />
<rect x="291" y="1066.8000000000002" width="10.5" height="1.3" fill="#ffffff" />
<rect x="325" y="1058" width="14" height="14" fill="#f0503a" rx="1.2"/>
<path d="M335.5 1061.3 L329 1061.3 L329 1068.8 L335.5 1068.8" fill="none" stroke="#ffffff" stroke-width="2.2" />
<rect x="361" y="1057" width="16" height="16" fill="#b4a892" />
<path d="M361 1057 L377 1057 L377 1064 L361 1070 Z" fill="#8fa4b0" stroke="none" stroke-width="1" />
<path d="M361 1057 L368 1057 L366 1073 L361 1073 Z" fill="#c8a888" stroke="none" stroke-width="1" />
<path d="M363 1057.5 L370 1066" fill="none" stroke="#c83858" stroke-width="1.6" />
<circle cx="369.6" cy="1065.5" r="1.8" fill="#d82838" stroke="none" stroke-width="1" />
<rect x="368.9" y="1066" width="1.4" height="7" fill="#a82030" />
<rect x="372" y="1069" width="5" height="4" fill="#e8e8e8" />
<path d="M400.5 1057.5 L408.5 1057.5 L412 1061 L412 1071.5 L400.5 1071.5 Z" fill="#ffffff" stroke="none" stroke-width="1" />
<path d="M408.5 1057.5 L408.5 1061 L412 1061" fill="none" stroke="#c8c8c8" stroke-width="0.8" />
<rect x="1471" y="1057" width="16" height="15" fill="#49a9ea" />
<circle cx="1477.5" cy="1067" r="2.8" fill="none" stroke="#ffffff" stroke-width="1.6" />
<path d="M1479.5 1065 L1485 1059.5 M1483 1061.5 L1485 1063.5" fill="none" stroke="#ffffff" stroke-width="1.6" />
<circle cx="1503" cy="1064.9" r="7" fill="#5cb82a" stroke="#8fd85a" stroke-width="0.8" />
<text x="1503" y="1069.3" font-size="13.5" fill="#ffffff" font-family='"Liberation Sans","Noto Sans CJK SC",sans-serif' text-anchor="middle" font-weight="bold">e</text>
<ellipse cx="1526.3" cy="1065.3" rx="4.2" ry="6.2" fill="#16161a" stroke="#e8e8e8" stroke-width="0.6"/>
<ellipse cx="1526.3" cy="1067.6" rx="2.6" ry="3.4" fill="#ffffff"/>
<path d="M1521.5 1065.5 Q1526.3 1068.5 1531.2 1065.5 L1531.2 1067.5 Q1526.3 1070.5 1521.5 1067.5 Z" fill="#e02828" stroke="none" stroke-width="1" />
<circle cx="1525" cy="1061.6" r="0.9" fill="#ffffff" stroke="none" stroke-width="1" />
<circle cx="1527.8" cy="1061.6" r="0.9" fill="#ffffff" stroke="none" stroke-width="1" />
<rect x="1527.5" y="1063.8" width="7.5" height="6.2" fill="#f0b81a" rx="0.8"/>
<path d="M1521.5 1072 L1524.5 1071.2 M1531 1072 L1528 1071.2" fill="none" stroke="#f0982a" stroke-width="1.4" />
<rect x="1548.5" y="1058.5" width="5" height="4" fill="none" stroke="#ffffff" stroke-width="1.2"/>
<rect x="1546.8" y="1062.5" width="8.4" height="9.5" fill="none" stroke="#ffffff" stroke-width="1.2" rx="1"/>
<path d="M1553 1069.5 L1555.5 1072 L1559.5 1067" fill="none" stroke="#c8c8c8" stroke-width="1.1" />
<ellipse cx="1572.8" cy="1062.8" rx="5.6" ry="4.8" fill="#5ec43a"/>
<ellipse cx="1578" cy="1067" rx="4.8" ry="4" fill="#d8f0c8"/>
<circle cx="1570.8" cy="1061.8" r="0.8" fill="#1a5a1a" stroke="none" stroke-width="1" />
<circle cx="1574.8" cy="1061.8" r="0.8" fill="#1a5a1a" stroke="none" stroke-width="1" />
<path d="M1598.5 1056.8 L1605.2 1059.3 L1605.2 1065 Q1604.5 1070 1598.5 1073 Q1592.5 1070 1591.8 1065 L1591.8 1059.3 Z" fill="#d8dcd8" stroke="#8a9a8a" stroke-width="0.6" />
<path d="M1598.5 1058.6 L1603.5 1060.5 L1603.5 1065 Q1603 1068.8 1598.5 1071.2 Q1594 1068.8 1593.5 1065 L1593.5 1060.5 Z" fill="#4caa2a" stroke="none" stroke-width="1" />
<path d="M1599.8 1060.5 L1596.3 1065.5 L1598.6 1065.5 L1597.4 1069.5 L1601 1064.3 L1598.8 1064.3 Z" fill="#ffffff" stroke="none" stroke-width="1" />
<circle cx="1622.8" cy="1065" r="7.8" fill="#e6d81e" stroke="#9ab81a" stroke-width="1" />
<path d="M1618.8 1065 L1626.8 1065 M1622.8 1061 L1622.8 1069" fill="none" stroke="#1f8a1a" stroke-width="2.6" />
<rect x="1641.5" y="1059.5" width="12.5" height="8.5" fill="none" stroke="#ffffff" stroke-width="1.2"/>
<rect x="1639.5" y="1059.5" width="4" height="3.6" fill="#04060e" stroke="#ffffff" stroke-width="1.1"/>
<path d="M1647.5 1068 L1647.5 1071 M1643.5 1071.3 L1652 1071.3" fill="none" stroke="#ffffff" stroke-width="1.2" />
<path d="M1663.5 1062.5 L1666.2 1062.5 L1669.5 1059.3 L1669.5 1070.7 L1666.2 1067.5 L1663.5 1067.5 Z" fill="none" stroke="#ffffff" stroke-width="1.1" />
<path d="M1671.8 1062.3 Q1673.6 1065 1671.8 1067.7" fill="none" stroke="#ffffff" stroke-width="1.1" />
<path d="M1674.2 1060.3 Q1677.2 1065 1674.2 1069.7" fill="none" stroke="#b8b8b8" stroke-width="1.0" />
<path d="M1676.8 1058.5 Q1681 1065 1676.8 1071.5" fill="none" stroke="#6a6a6a" stroke-width="1.0" />
<text x="1687.2" y="1070.3" font-size="13.5" fill="#ffffff" font-family='"Noto Sans CJK SC",sans-serif' font-weight="bold">中</text>
<g transform="rotate(-12 1724 1065)"><rect x="1715.5" y="1056.5" width="18" height="17" rx="2.5" fill="#f04a1c"/></g>
<text x="1718" y="1072" font-size="17" fill="#ffffff" font-family='"Liberation Sans","Noto Sans CJK SC",sans-serif' font-weight="bold" font-style="italic">S</text>
</svg>
</body></html>
